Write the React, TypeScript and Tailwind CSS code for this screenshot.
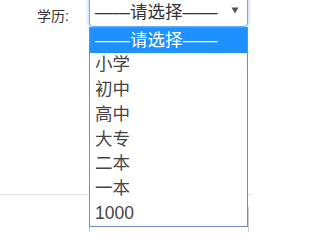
import { useState } from 'react'

const options = ['——请选择——', '小学', '初中', '高中', '大专', '二本', '一本', '1000']

export default function App() {
  const [active] = useState(0)

  return (
    <div
      className="relative h-[232px] w-[252px] overflow-hidden bg-white text-[#333]"
      style={{ fontFamily: '"Liberation Sans", "Noto Sans CJK SC", sans-serif' }}
    >
      <div className="flex h-[195px] items-start border-b border-[#e5e5e5]">
        <label className="w-[89px] pr-[20px] pt-[6px] text-right text-[14px] leading-[20px]">学历:</label>
        <div className="relative w-[159px]">
          {/* select box, top cropped */}
          <div className="-mt-[8px] flex h-[35px] items-center justify-between rounded-[4px] border border-[#66afe9] bg-white pl-[5px] pr-[8px] pt-[5px] shadow-[0_0_4px_rgba(102,175,233,0.7)]">
            <span className="text-[17.5px] leading-[22px] text-[#333]">——请选择——</span>
            <svg width="8" height="7" viewBox="0 0 8 7" className="mb-[3px]">
              <path d="M0.5 0.5 H7.5 L4 6.5 Z" fill="#555" />
            </svg>
          </div>
          {/* open dropdown list */}
          <ul className="absolute left-0 top-[27px] z-10 w-[159px] border border-[#6b8cc7] bg-white">
            {options.map((o, i) => (
              <li
                key={o}
                className={`flex h-[24.75px] items-center pl-[5px] text-[17.5px] leading-none ${
                  i === active ? 'bg-[#1e90ff] text-white' : 'text-[#444]'
                }`}
              >
                {o}
              </li>
            ))}
          </ul>
        </div>
      </div>
      <div className="pl-[89px] pt-[9px]">
        <div className="h-[34px] w-[160px] rounded-[4px] border border-[#ccc]" />
      </div>
    </div>
  )
}
